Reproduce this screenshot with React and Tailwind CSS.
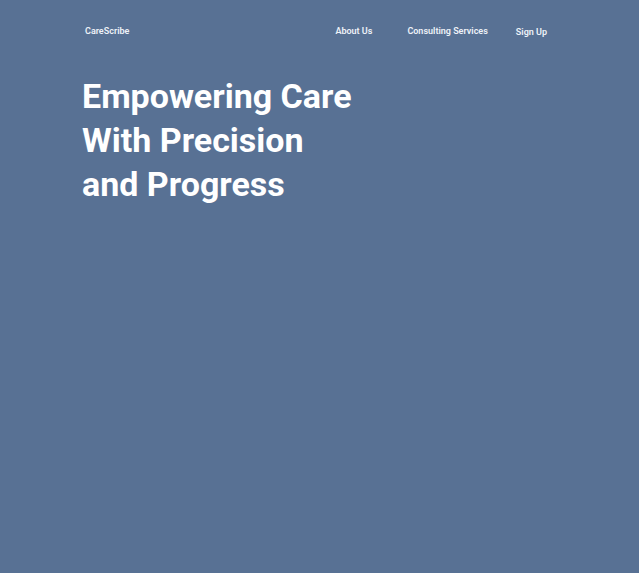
export default function App() {
  return (
    <div
      className="min-h-screen w-full bg-[#587194] pt-[22px] text-white"
      style={{ fontFamily: "Roboto, 'Liberation Sans', sans-serif" }}
    >
      <nav className="flex h-[20px] items-center pl-[85px] pr-[92px]">
        <span className="text-[9px] font-semibold text-[#eef2f8]">CareScribe</span>
        <div className="ml-auto flex items-center">
          <a className="text-[9px] font-semibold text-[#eef2f8]">About Us</a>
          <a className="ml-[35px] text-[9px] font-semibold text-[#eef2f8]">Consulting Services</a>
          <a className="ml-[28px] mt-[2px] text-[9px] font-semibold text-[#eef2f8]">Sign Up</a>
        </div>
      </nav>
      <h1 className="mt-[32px] pl-[82px] text-[34px] font-bold leading-[44px]">
        Empowering Care
        <br />
        With Precision
        <br />
        and Progress
      </h1>
    </div>
  );
}
